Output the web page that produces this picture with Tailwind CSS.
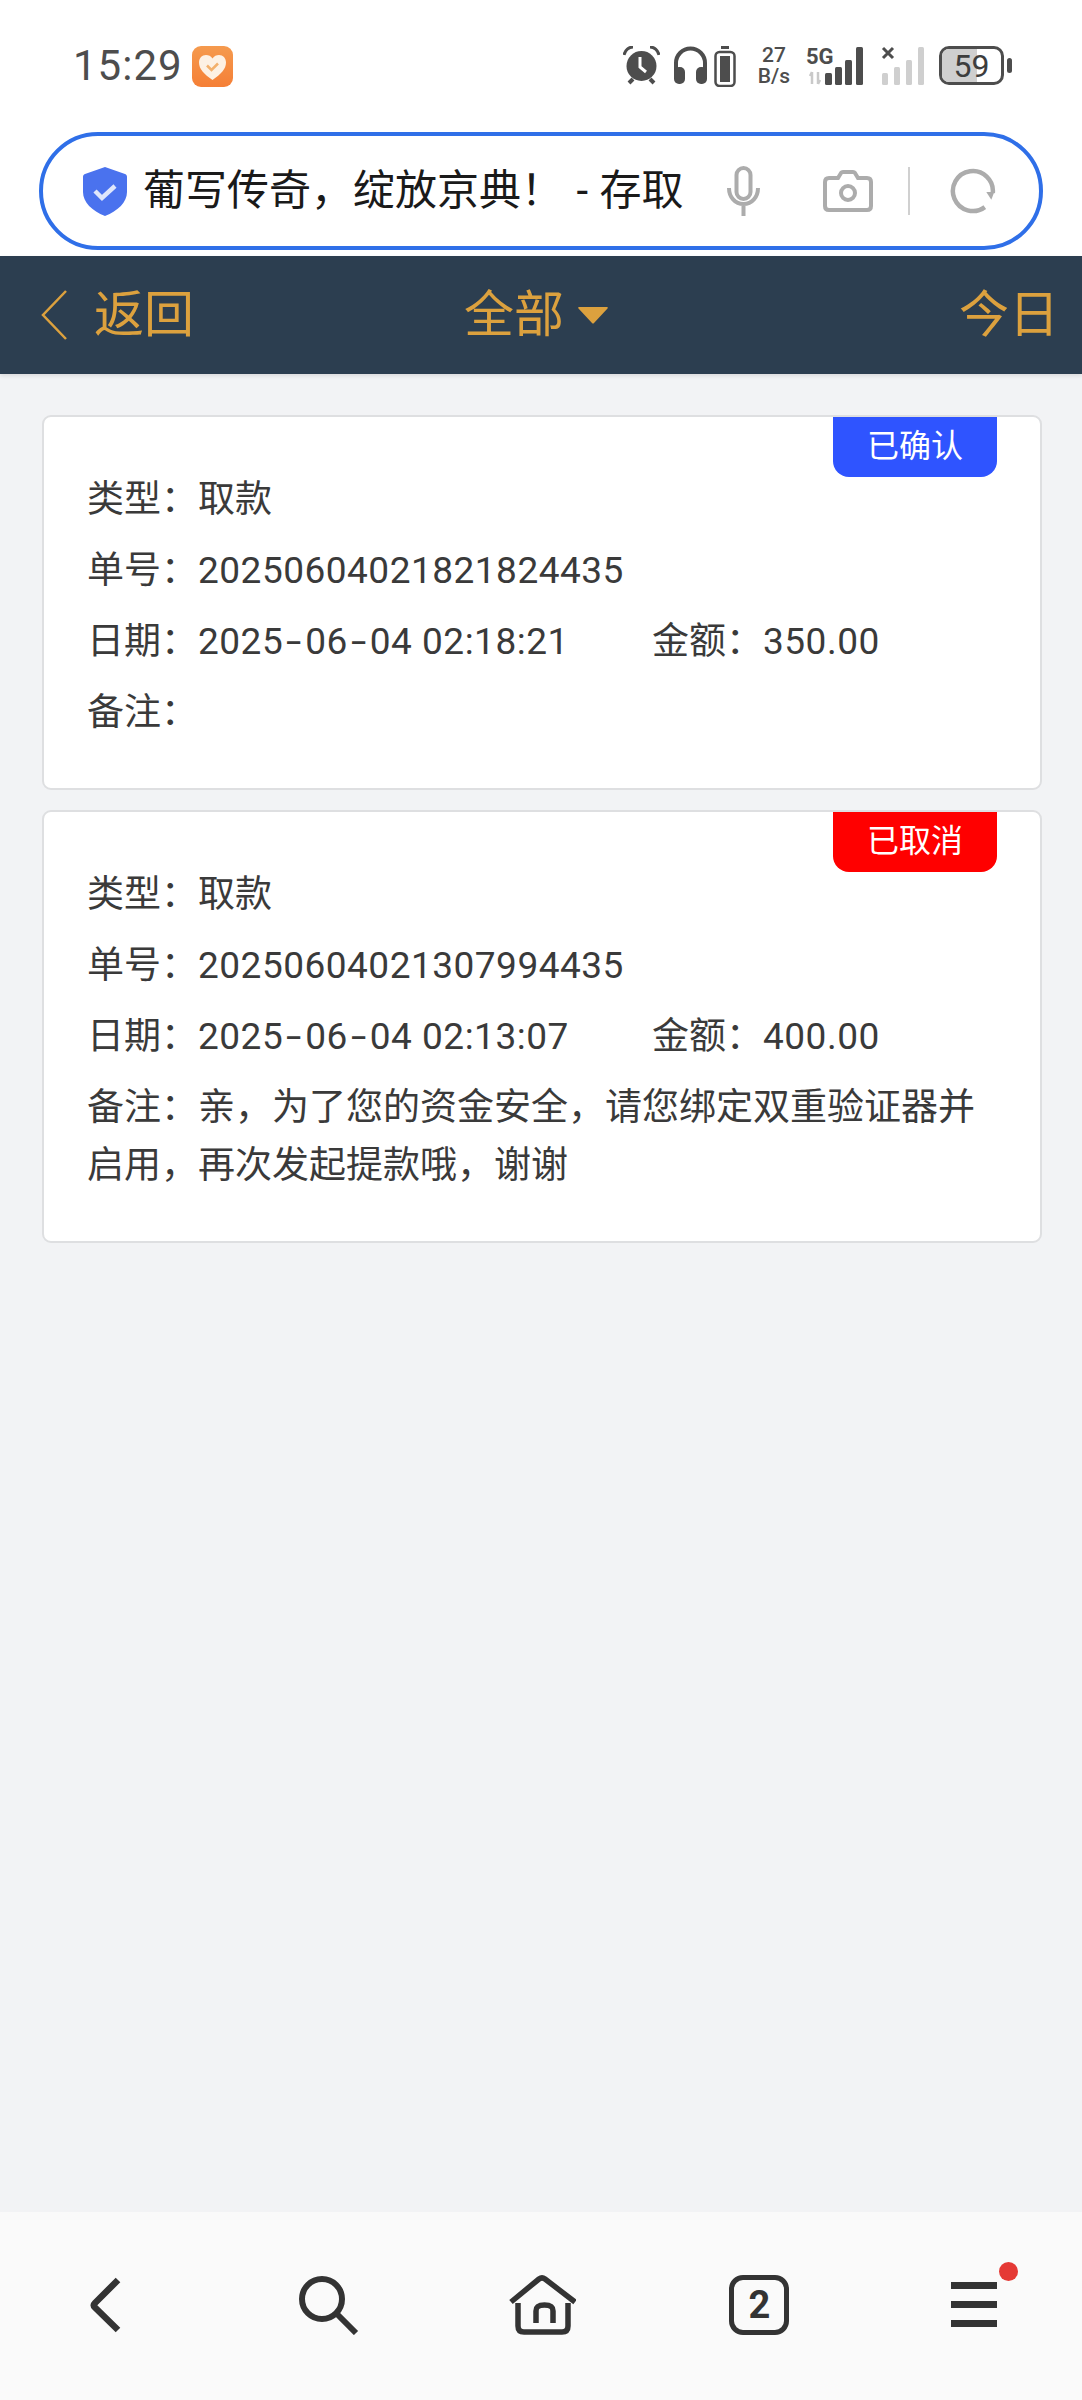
<!DOCTYPE html>
<html lang="zh-CN">
  <head>
    <meta charset="UTF-8" />
    <meta name="viewport" content="width=device-width, initial-scale=1.0" />
    <script src="https://cdn.jsdelivr.net/npm/@tailwindcss/browser@4"></script>
    <title>存取</title>
  </head>
  <body class="w-[1082px] h-[2400px] flex flex-col bg-[#f2f3f5] font-['Roboto','Noto_Sans_CJK_SC',sans-serif] overflow-hidden">
    <!-- status bar -->
    <div class="h-[132px] shrink-0 bg-white flex items-start pt-[46px] pl-[73px] text-[#4d4d4d]">
      <span class="text-[42px] leading-[40px] tracking-[1px]">15:29</span>
      <svg class="ml-[9px] w-[41px] h-[41px]" viewBox="0 0 41 41">
        <defs>
          <linearGradient id="appBg" x1="0" y1="0" x2="0" y2="1">
            <stop offset="0" stop-color="#f59a4e" />
            <stop offset="1" stop-color="#f57f36" />
          </linearGradient>
        </defs>
        <rect width="41" height="41" rx="9" fill="url(#appBg)" />
        <path d="M20.500 34C12 28 7 23 7 16.500c0-4.500 3-7.500 7-7.500 2.500 0 5 1 6.500 3.500C22 10 24.500 9 27 9c4 0 7 3 7 7.500C34 23 29 28 20.500 34z" fill="#fdf1e4" />
        <path d="M15 19.500l4.500 4.500 6.500-6.500" fill="none" stroke="#f3b06c" stroke-width="2.500" />
      </svg>
      <div class="ml-auto flex items-start mr-[70px]">
        <!-- alarm -->
        <svg class="ml-[-2px] w-[37px] h-[39px]" viewBox="0 0 37 39">
          <circle cx="18.500" cy="20" r="15" fill="#4d4d4d" />
          <path d="M1 9C2 4 6 1 10 1M36 9C35 4 31 1 27 1" fill="none" stroke="#4d4d4d" stroke-width="3" />
          <path d="M6 37l4-4M31 37l-4-4" stroke="#4d4d4d" stroke-width="4" />
          <path d="M17 11v10l6 5" fill="none" stroke="#fff" stroke-width="3" />
        </svg>
        <!-- headphones -->
        <svg class="ml-[13px] w-[35px] h-[39px]" viewBox="0 0 35 39">
          <path d="M3 26V17a14.500 14.500 0 0 1 29 0v9" fill="none" stroke="#4d4d4d" stroke-width="4" />
          <rect x="1" y="21" width="11" height="17" rx="5" fill="#4d4d4d" />
          <rect x="23" y="21" width="11" height="17" rx="5" fill="#4d4d4d" />
        </svg>
        <!-- battery saver -->
        <svg class="ml-[6px] w-[22px] h-[41px]" viewBox="0 0 22 41">
          <rect x="7" y="0" width="8" height="3" fill="#4d4d4d" />
          <rect x="1.500" y="6" width="19" height="34" rx="4" fill="none" stroke="#4d4d4d" stroke-width="2.500" />
          <rect x="6" y="10" width="10" height="26" fill="#4d4d4d" />
        </svg>
        <div class="ml-[19px] w-[38px] flex flex-col items-center text-[21px] leading-[21px] font-medium -mt-[1px]">
          <span>27</span>
          <span>B/s</span>
        </div>
        <!-- 5G signal -->
        <div class="ml-[13px] relative w-[63px] h-[40px]">
          <span class="absolute left-0 top-0 text-[22px] leading-[22px] font-bold">5G</span>
          <svg class="absolute left-0 top-0 w-[63px] h-[40px]" viewBox="0 0 63 40">
            <path d="M6 26v12M4 30l2-4M12 26v12M14 34l-2 4" fill="none" stroke="#c9c9c9" stroke-width="2.500" />
            <rect x="19" y="27" width="7" height="12" rx="1.500" fill="#4d4d4d" />
            <rect x="29" y="21" width="7" height="18" rx="1.500" fill="#4d4d4d" />
            <rect x="39" y="14" width="7" height="25" rx="1.500" fill="#4d4d4d" />
            <rect x="50" y="1" width="7" height="38" rx="1.500" fill="#4d4d4d" />
          </svg>
        </div>
        <!-- second sim -->
        <svg class="ml-[12px] w-[44px] h-[40px]" viewBox="0 0 44 40">
          <path d="M2 2l10 10M12 2L2 12" stroke="#4d4d4d" stroke-width="3" />
          <rect x="1" y="27" width="6" height="12" rx="1.500" fill="#cfcfcf" />
          <rect x="13" y="21" width="6" height="18" rx="1.500" fill="#cfcfcf" />
          <rect x="25" y="14" width="6" height="25" rx="1.500" fill="#cfcfcf" />
          <rect x="37" y="1" width="6" height="38" rx="1.500" fill="#cfcfcf" />
        </svg>
        <!-- battery -->
        <div class="ml-[14px] relative w-[65px] h-[39px] rounded-[10px] border-[3px] border-[#4d4d4d] overflow-hidden flex items-center justify-center">
          <div class="absolute left-0 top-0 bottom-0 w-[59%] bg-[#cfcfcf]"></div>
          <span class="relative text-[32px] leading-[32px] text-[#3d3d3d]">59</span>
        </div>
        <div class="ml-[3px] mt-[12px] w-[5px] h-[15px] rounded-full bg-[#4d4d4d]"></div>
      </div>
    </div>

    <!-- url bar -->
    <div class="h-[124px] shrink-0 bg-white px-[39px]">
      <div class="h-[118px] rounded-full border-[4px] border-[#2f6fe8] flex items-center pl-[40px]">
        <svg class="w-[44px] h-[49px] shrink-0" viewBox="0 0 44 49">
          <path d="M22 0l20 7c1.500.5 2 1.500 2 3v15c0 10-9 19-22 24C9 44 0 35 0 25V10c0-1.500.5-2.500 2-3z" fill="#4a72ee" />
          <path d="M12 24l7 7 13-12" fill="none" stroke="#dfe6fb" stroke-width="4.500" />
        </svg>
        <span class="ml-[16px] w-[570px] shrink-0 text-[42px] leading-[60px] text-[#1a1a1a] whitespace-nowrap">葡写传奇，绽放京典！<span class="ml-[3px] mr-[1px]"> - </span>存取</span>
        <svg class="ml-[14px] w-[33px] h-[51px] shrink-0" viewBox="0 0 33 51">
          <rect x="9.500" y="2" width="14" height="31" rx="7" fill="none" stroke="#acacac" stroke-width="4" />
          <path d="M2 22c0 9 6 16 14.500 16S31 31 31 22M16.500 38v12" fill="none" stroke="#acacac" stroke-width="4" />
        </svg>
        <svg class="ml-[63px] w-[50px] h-[42px] shrink-0" viewBox="0 0 50 42">
          <path d="M6 8h9l3-5c.5-.7 1-1 2-1h10c1 0 1.500.3 2 1l3 5h9c2.500 0 4 1.500 4 4v24c0 2.500-1.500 4-4 4H6c-2.500 0-4-1.500-4-4V12c0-2.500 1.500-4 4-4z" fill="none" stroke="#acacac" stroke-width="4" />
          <circle cx="25" cy="23" r="7" fill="none" stroke="#acacac" stroke-width="4" />
        </svg>
        <div class="ml-[35px] w-[2px] h-[48px] bg-[#d0d0d0] shrink-0"></div>
        <svg class="ml-[40px] w-[46px] h-[46px] shrink-0" viewBox="0 0 46 46">
          <path d="M34.800 39.100A20 20 0 1 1 42.800 25" fill="none" stroke="#acacac" stroke-width="4.500" />
          <path d="M36.300 24h8l-3 7.700z" fill="#acacac" />
        </svg>
      </div>
    </div>

    <!-- header -->
    <div class="h-[118px] shrink-0 bg-[#2c3e50] flex items-center pl-[41px] pr-[23px] text-[50px] text-[#dca13e] shadow-[0_2px_4px_rgba(0,0,0,0.1)]">
      <div class="w-[423px] flex items-center">
        <svg class="w-[26px] h-[50px]" viewBox="0 0 26 50">
          <path d="M25 1L2 25l23 24" fill="none" stroke="#dca13e" stroke-width="2.500" />
        </svg>
        <span class="ml-[27px]">返回</span>
      </div>
      <span>全部</span>
      <svg class="ml-[14px] w-[30px] h-[17px]" viewBox="0 0 30 17">
        <path d="M1 0h28c1 0 1 1 .5 1.500L16 16c-.5.7-1.500.7-2 0L.5 1.500C0 1 0 0 1 0z" fill="#dca13e" />
      </svg>
      <span class="ml-auto">今日</span>
    </div>

    <!-- list -->
    <div class="flex-1 pl-[42px] pr-[40px] pt-[41px] flex flex-col gap-[20px] text-[37px] leading-[58px] text-[#3a3a3a]">
      <div class="relative bg-white border-2 border-[#dedfe1] rounded-[9px] pt-[54px] pb-[46px] pl-[43px] pr-[30px] flex flex-col gap-[13px]">
        <span class="absolute top-0 right-[43px] w-[164px] h-[60px] rounded-b-[16px] bg-[#2f54ff] text-white text-[32px] leading-[58px] text-center">已确认</span>
        <p>类型：取款</p>
        <p>单号：<span class="tracking-[0.5px]">20250604021821824435</span></p>
        <div class="flex">
          <p class="w-[565px]">日期：<span class="tracking-[0.5px]">2025<span class="inline-block w-[22px] text-center scale-x-[1.5]">-</span>06<span class="inline-block w-[22px] text-center scale-x-[1.5]">-</span>04 02:18:21</span></p>
          <p>金额：<span class="tracking-[0.5px]">350.00</span></p>
        </div>
        <p>备注：</p>
      </div>
      <div class="relative bg-white border-2 border-[#dedfe1] rounded-[9px] pt-[54px] pb-[46px] pl-[43px] pr-[30px] flex flex-col gap-[13px]">
        <span class="absolute top-0 right-[43px] w-[164px] h-[60px] rounded-b-[16px] bg-[#ff0000] text-white text-[32px] leading-[58px] text-center">已取消</span>
        <p>类型：取款</p>
        <p>单号：<span class="tracking-[0.5px]">20250604021307994435</span></p>
        <div class="flex">
          <p class="w-[565px]">日期：<span class="tracking-[0.5px]">2025<span class="inline-block w-[22px] text-center scale-x-[1.5]">-</span>06<span class="inline-block w-[22px] text-center scale-x-[1.5]">-</span>04 02:13:07</span></p>
          <p>金额：<span class="tracking-[0.5px]">400.00</span></p>
        </div>
        <p>备注：亲，为了您的资金安全，请您绑定双重验证器并启用，再次发起提款哦，谢谢</p>
      </div>
    </div>

    <!-- bottom nav -->
    <div class="h-[188px] shrink-0 bg-[#fafafa] grid grid-cols-5 items-start pt-[63px]">
      <div class="flex justify-center pr-[6px]">
        <svg class="w-[60px] h-[60px]" viewBox="0 0 60 60">
          <path d="M43 5L20 28c-1.500 1.500-1.500 3 0 4.500L43 55" fill="none" stroke="#333" stroke-width="6.500" />
        </svg>
      </div>
      <div class="flex justify-center pl-[8px]">
        <svg class="w-[60px] h-[60px]" viewBox="0 0 60 60">
          <circle cx="23" cy="24" r="20" fill="none" stroke="#333" stroke-width="6" />
          <path d="M37 38l20 20" stroke="#333" stroke-width="6" />
        </svg>
      </div>
      <div class="flex justify-center">
        <svg class="w-[70px] h-[62px]" viewBox="0 0 70 62">
          <path d="M5 27L33 4c2-1.500 4-1.500 6 0l30 23" fill="none" stroke="#333" stroke-width="5.500" />
          <path d="M12 28v23c0 4 2 6 6 6h38c4 0 6-2 6-6V28" fill="none" stroke="#333" stroke-width="5.500" />
          <path d="M30 48V36c0-4 2-6 8.500-6s8.500 2 8.500 6v12" fill="none" stroke="#333" stroke-width="5.500" />
        </svg>
      </div>
      <div class="flex justify-center pl-[4px]">
        <div class="w-[60px] h-[60px] rounded-[14px] border-[5px] border-[#333] flex items-center justify-center text-[#333] text-[38px] leading-none font-bold">2</div>
      </div>
      <div class="flex justify-center relative">
        <div class="flex flex-col gap-[12px] pt-[7px]">
          <div class="w-[46px] h-[7px] bg-[#333]"></div>
          <div class="w-[46px] h-[7px] bg-[#333]"></div>
          <div class="w-[46px] h-[7px] bg-[#333]"></div>
        </div>
        <div class="absolute left-[133px] top-[-13px] w-[19px] h-[19px] rounded-full bg-[#e53935]"></div>
      </div>
    </div>
  </body>
</html>
